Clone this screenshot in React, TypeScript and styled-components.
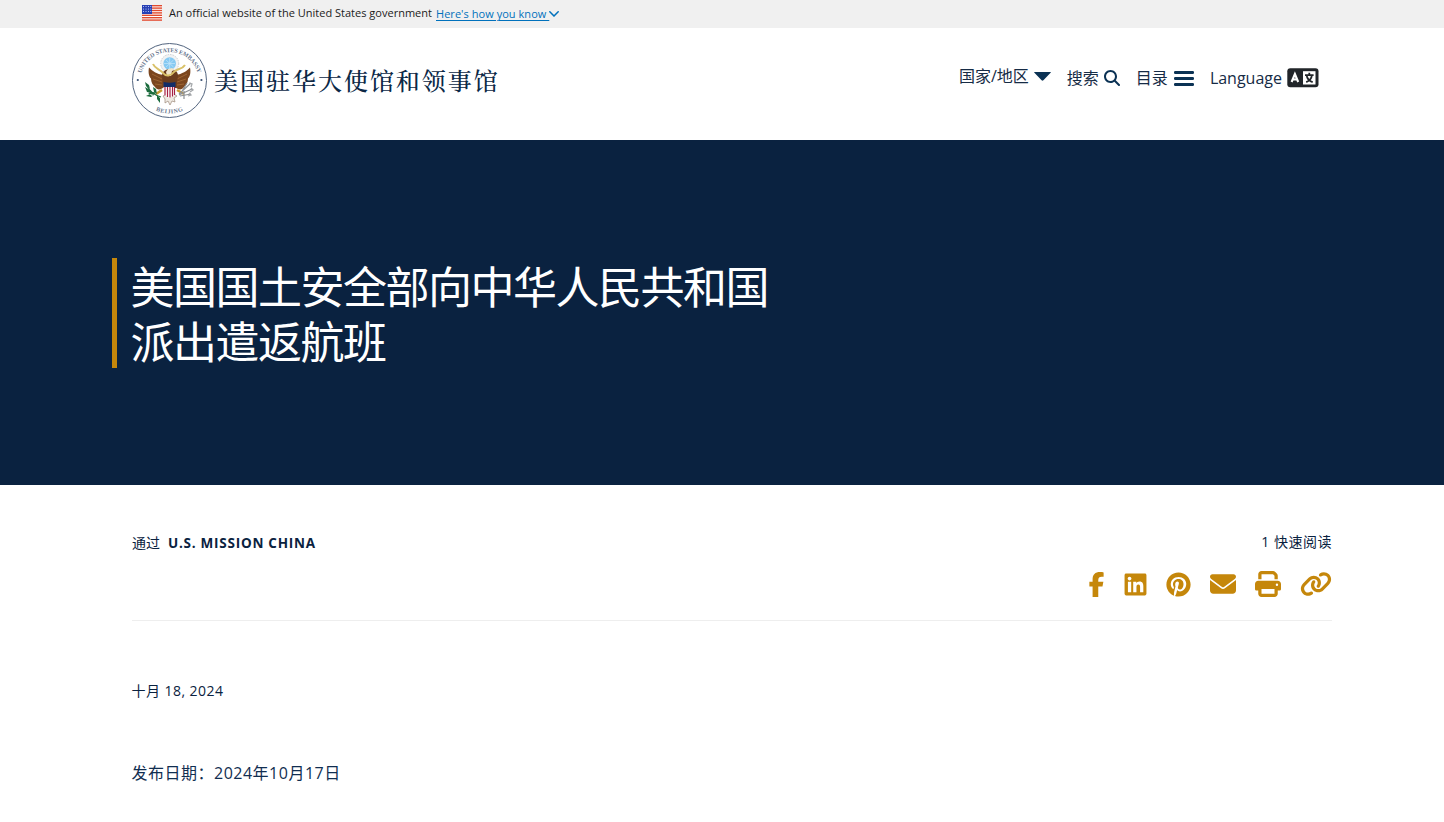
import React from 'react';
import styled, { createGlobalStyle } from 'styled-components';
import {
  FaEnvelope,
  FaFacebookF,
  FaLinkedin,
  FaLink,
  FaMagnifyingGlass,
  FaPinterest,
  FaPrint,
} from 'react-icons/fa6';

const navy = '#0a2240';
const ink = '#112e51';
const gold = '#c5870b';

const GlobalStyle = createGlobalStyle`
  * { box-sizing: border-box; }
  body {
    margin: 0;
    background: #fff;
    color: ${navy};
    font-family: "Open Sans", "Noto Sans CJK SC", sans-serif;
    font-weight: 400;
    overflow: hidden;
  }
  svg { display: block; flex: none; }
`;

const Page = styled.div`
  width: 1444px;
  height: 822px;
  overflow: hidden;
`;

const GovBanner = styled.div`
  display: flex;
  align-items: center;
  height: 28px;
  padding: 0 0 2px 142px;
  background: #f0f0f0;
  color: #1b1b1b;
  font-size: 11px;
  line-height: 16px;
  white-space: nowrap;
`;

const BannerText = styled.span`
  width: 263px;
  margin: 0 4px 0 7px;
  letter-spacing: 0.01px;
`;

const BannerLink = styled.a`
  display: flex;
  align-items: center;
  padding-top: 2px;
  color: #0071bc;
  letter-spacing: 0.04px;
  text-decoration: underline;
  text-underline-offset: 2px;
  white-space: pre;
`;

const Header = styled.header`
  display: flex;
  justify-content: space-between;
  height: 112px;
  padding: 15px 125px 0 132px;
`;

const Brand = styled.div`
  display: flex;
  gap: 6px;
`;

const SiteName = styled.div`
  padding-top: 19px;
  color: #0b2846;
  font-family: "Noto Serif CJK SC", "Noto Sans CJK SC", serif;
  font-size: 24px;
  font-weight: 500;
  line-height: 36px;
  letter-spacing: 1.98px;
  white-space: nowrap;
`;

const Nav = styled.nav`
  display: flex;
  align-items: flex-start;
  gap: 16px;
  padding-top: 23px;
`;

const NavItem = styled.a<{ $lift?: number; $gap?: number }>`
  display: flex;
  align-items: center;
  gap: ${(p) => p.$gap ?? 5}px;
  margin-top: ${(p) => -(p.$lift ?? 0)}px;
  color: #162b45;
  font-size: 16px;
  line-height: 24px;
  white-space: nowrap;
  svg { color: #0b3254; }
`;

const Hero = styled.section`
  height: 345px;
  padding: 118px 0 0 112px;
  background: ${navy};
`;

const Title = styled.h1`
  margin: 0;
  padding-left: 13.5px;
  width: 700px;
  height: 110px;
  border-left: 5px solid ${gold};
  color: #fff;
  font-size: 44px;
  font-weight: 400;
  line-height: 55px;
  letter-spacing: -1.5px;
`;

const TitleText = styled.span`
  display: block;
  padding-top: 2px;
`;

const Meta = styled.section`
  display: flex;
  justify-content: space-between;
  width: 1200px;
  height: 136px;
  margin-left: 132px;
  padding-top: 46px;
  border-bottom: 1px solid #eeeeee;
`;

const Byline = styled.div`
  display: flex;
  gap: 8px;
  height: 24px;
  font-size: 14px;
  line-height: 24px;
`;

const Author = styled.strong`
  font-weight: 700;
  font-size: 13.5px;
  letter-spacing: 0.75px;
`;

const Tools = styled.div`
  display: flex;
  flex-direction: column;
  align-items: flex-end;
`;

const ReadTime = styled.div`
  font-size: 14px;
  line-height: 22px;
  letter-spacing: 0.5px;
`;

const ShareRow = styled.div`
  display: flex;
  align-items: center;
  height: 26px;
  margin-top: 18px;
  color: ${gold};
`;

const ShareIcon = styled.a<{ $before?: number }>`
  margin-left: ${(p) => p.$before ?? 0}px;
`;

const Article = styled.article`
  padding: 58px 0 0 131.5px;
`;

const PostDate = styled.div`
  font-size: 14px;
  line-height: 24px;
  letter-spacing: 0.45px;
`;

const Body = styled.p`
  margin: 56px 0 0;
  color: ${ink};
  font-size: 16px;
  line-height: 28px;
  letter-spacing: 0.5px;
`;

const Flag = () => (
  <svg width="20" height="16" viewBox="0 0 20 16">
    <rect width="20" height="16" fill="#fff" />
    {[0, 2.4, 4.8, 7.2, 9.6, 12, 14.4].map((y) => (
      <rect key={y} y={y} width="20" height="1.4" fill="#e0492f" />
    ))}
    <rect width="10" height="9" fill="#2740b5" />
    {[1.5, 4, 6.5].map((y) =>
      [1.5, 4, 6.5, 8.8].map((x) => <circle key={`${x}-${y}`} cx={x} cy={y} r=".55" fill="#cdd6fa" />),
    )}
  </svg>
);

const Seal = () => (
  <svg width="76" height="76" viewBox="0 0 76 76">
    <defs>
      <path id="ringTop" d="M9.3 30.4A29.3 29.3 0 0 1 65.7 30.4" />
      <path id="ringBottom" d="M18.6 64.5A33 33 0 0 0 56.4 64.5" />
    </defs>
    <circle cx="37.5" cy="37.5" r="37" fill="#fff" stroke="#53657f" />
    <g fill="#66748c" fontFamily="Liberation Serif, serif" fontSize="6" fontWeight="700">
      <text>
        <textPath href="#ringTop" startOffset="50%" textAnchor="middle" textLength="75">UNITED STATES EMBASSY</textPath>
      </text>
      <text>
        <textPath href="#ringBottom" startOffset="50%" textAnchor="middle" textLength="28">BEIJING</textPath>
      </text>
    </g>
    <circle cx="5.8" cy="37" r="1.1" fill="#354d70" />
    <circle cx="69.4" cy="37" r="1.1" fill="#354d70" />
    <circle cx="37.7" cy="20.5" r="9" fill="#f1f2f3" stroke="#c9cdd0" strokeDasharray="1.5 1" />
    <circle cx="37.7" cy="20.5" r="6.3" fill="#85c9f2" />
    <path d="M34 17l7.5 7M41.5 17L34 24M37.7 15v11M32 20.5h11" stroke="#c4e5fa" strokeWidth=".7" />
    <path d="M31 32C25 31 20 28 17 24.5c-1 5 0 9 2 11 0 4 2 7 4 8.5 2 3.5 6 3 9 0z" fill="#7b461f" />
    <path d="M44 32c6-1 11-4 14-7.5 1 5 0 9-2 11 0 4-2 7-4 8.5-2 3.5-6 3-9 0z" fill="#7b461f" />
    <path d="M20 31l10 5m-9 0l9 3m-7 2l7 1M55 31l-10 5m9 0-9 3m7 2-7 1" stroke="#a56c38" strokeWidth=".8" />
    <path d="M30 33c0-5 4-7 8-7s8 2 8 7l-2 12H32z" fill="#6b3d1e" />
    <path d="M34 29l2-3 4-1 3 2-3 1-1 5h-4z" fill="#f0e5ca" />
    <path d="M21 21c2 5 7 5 10 9s8 3 11-1 8-2 11-7" fill="none" stroke="#d9c168" strokeWidth="2" />
    <path d="M31 53l7-4 7 4-3 2 1 4-3-1-2 4-2-4-3 2v-4z" fill="#eee9e2" stroke="#9d8b7b" strokeWidth=".7" />
    <path d="M30 47l-6 4m21-4l7 4" stroke="#ca9a32" strokeWidth="2.5" />
    <path d="M32 43h11v9l-5.5 3-5.5-3z" fill="#fff" />
    <path d="M33 43v9.500M35.500 43v11M38 43v11.500M40.500 43v10.500M42.500 43v9" stroke="#a51f41" strokeWidth="1.2" />
    <path d="M31.500 39q6 1.500 12 0v5h-12z" fill="#122d68" />
    <g fill="#1c6c3e">
      <path d="M13 39l4 3 1 4-4-3zM13 44l5 3 2 3-5-1zM16 50l5-1 3 1-4 3zM21 44l1 5 3 2-1-5zM25 52l3 3v5l-3-4zM14 53l5 1 3-2-4-1z" />
      <path d="M15 43q4 8 14 11" fill="none" stroke="#1c6c3e" strokeWidth="1.2" />
    </g>
    <path d="M47 51L59 40M47 52l13-6M48 53l11-2M49 50l6-10M52 48v8" stroke="#8d9196" strokeWidth="1.2" />
    <path d="M57 40l3 1-1 3m0 1 2 2-3 2m-1 1 2 2-3 1" fill="none" stroke="#a4a7aa" strokeWidth="1.3" />
  </svg>
);

const Caret = () => (
  <svg width="17" height="9" viewBox="0 0 17 9">
    <path d="M.5 0h16q.7.1.1.7L9.4 8.3q-.9.8-1.8 0L.4.7Q-.2.1.5 0z" fill="currentColor" />
  </svg>
);

const MenuBars = () => (
  <svg width="20" height="15" viewBox="0 0 20 15">
    {[0, 6, 12].map((y) => (
      <rect key={y} y={y} width="20" height="2.9" rx="1.2" fill="currentColor" />
    ))}
  </svg>
);

const LinkChevron = () => (
  <svg width="10" height="6" viewBox="0 0 10 6">
    <path d="M.8.8L5 5 9.2.8" fill="none" stroke="#0071bc" strokeWidth="1.5" strokeLinecap="round" />
  </svg>
);

const LanguageMark = () => (
  <svg width="32" height="20" viewBox="0 0 32 20">
    <rect x=".3" y=".3" width="31.2" height="19" rx="3" fill="#212529" />
    <rect x="16" y="3.2" width="12.5" height="13.3" fill="#fff" />
    <path d="M4.6 14L7.9 6 11.2 14M6 11.5h4" fill="none" stroke="#fff" strokeWidth="2.1" />
    <path d="M18 7.2h8.6M22.3 4.7V7.2M19.2 14.2Q24.5 12 24.9 7M19.7 8q1.2 4.5 6 6.2" fill="none" stroke="#212529" strokeWidth="1.8" />
  </svg>
);

export default function App() {
  return (
    <Page>
      <GlobalStyle />
      <GovBanner>
        <Flag />
        <BannerText>An official website of the United States government</BannerText>
        <BannerLink>Here's how you know <LinkChevron /></BannerLink>
      </GovBanner>
      <Header>
        <Brand>
          <Seal />
          <SiteName>美国驻华大使馆和领事馆</SiteName>
        </Brand>
        <Nav>
          <NavItem $lift={2}>国家/地区<Caret /></NavItem>
          <NavItem>搜索<FaMagnifyingGlass size={16} /></NavItem>
          <NavItem $gap={6}>目录<MenuBars /></NavItem>
          <NavItem>Language<LanguageMark /></NavItem>
        </Nav>
      </Header>
      <Hero>
        <Title>
          <TitleText>美国国土安全部向中华人民共和国<br />派出遣返航班</TitleText>
        </Title>
      </Hero>
      <Meta>
        <Byline>通过<Author>U.S. MISSION CHINA</Author></Byline>
        <Tools>
          <ReadTime>1 快速阅读</ReadTime>
          <ShareRow>
            <ShareIcon><FaFacebookF size={25} /></ShareIcon>
            <ShareIcon $before={14}><FaLinkedin size={25} /></ShareIcon>
            <ShareIcon $before={18.5}><FaPinterest size={25} /></ShareIcon>
            <ShareIcon $before={19}><FaEnvelope size={26} /></ShareIcon>
            <ShareIcon $before={19}><FaPrint size={26} /></ShareIcon>
            <ShareIcon $before={19}><FaLink size={32} /></ShareIcon>
          </ShareRow>
        </Tools>
      </Meta>
      <Article>
        <PostDate>十月 18, 2024</PostDate>
        <Body>发布日期：2024年10月17日</Body>
      </Article>
    </Page>
  );
}
